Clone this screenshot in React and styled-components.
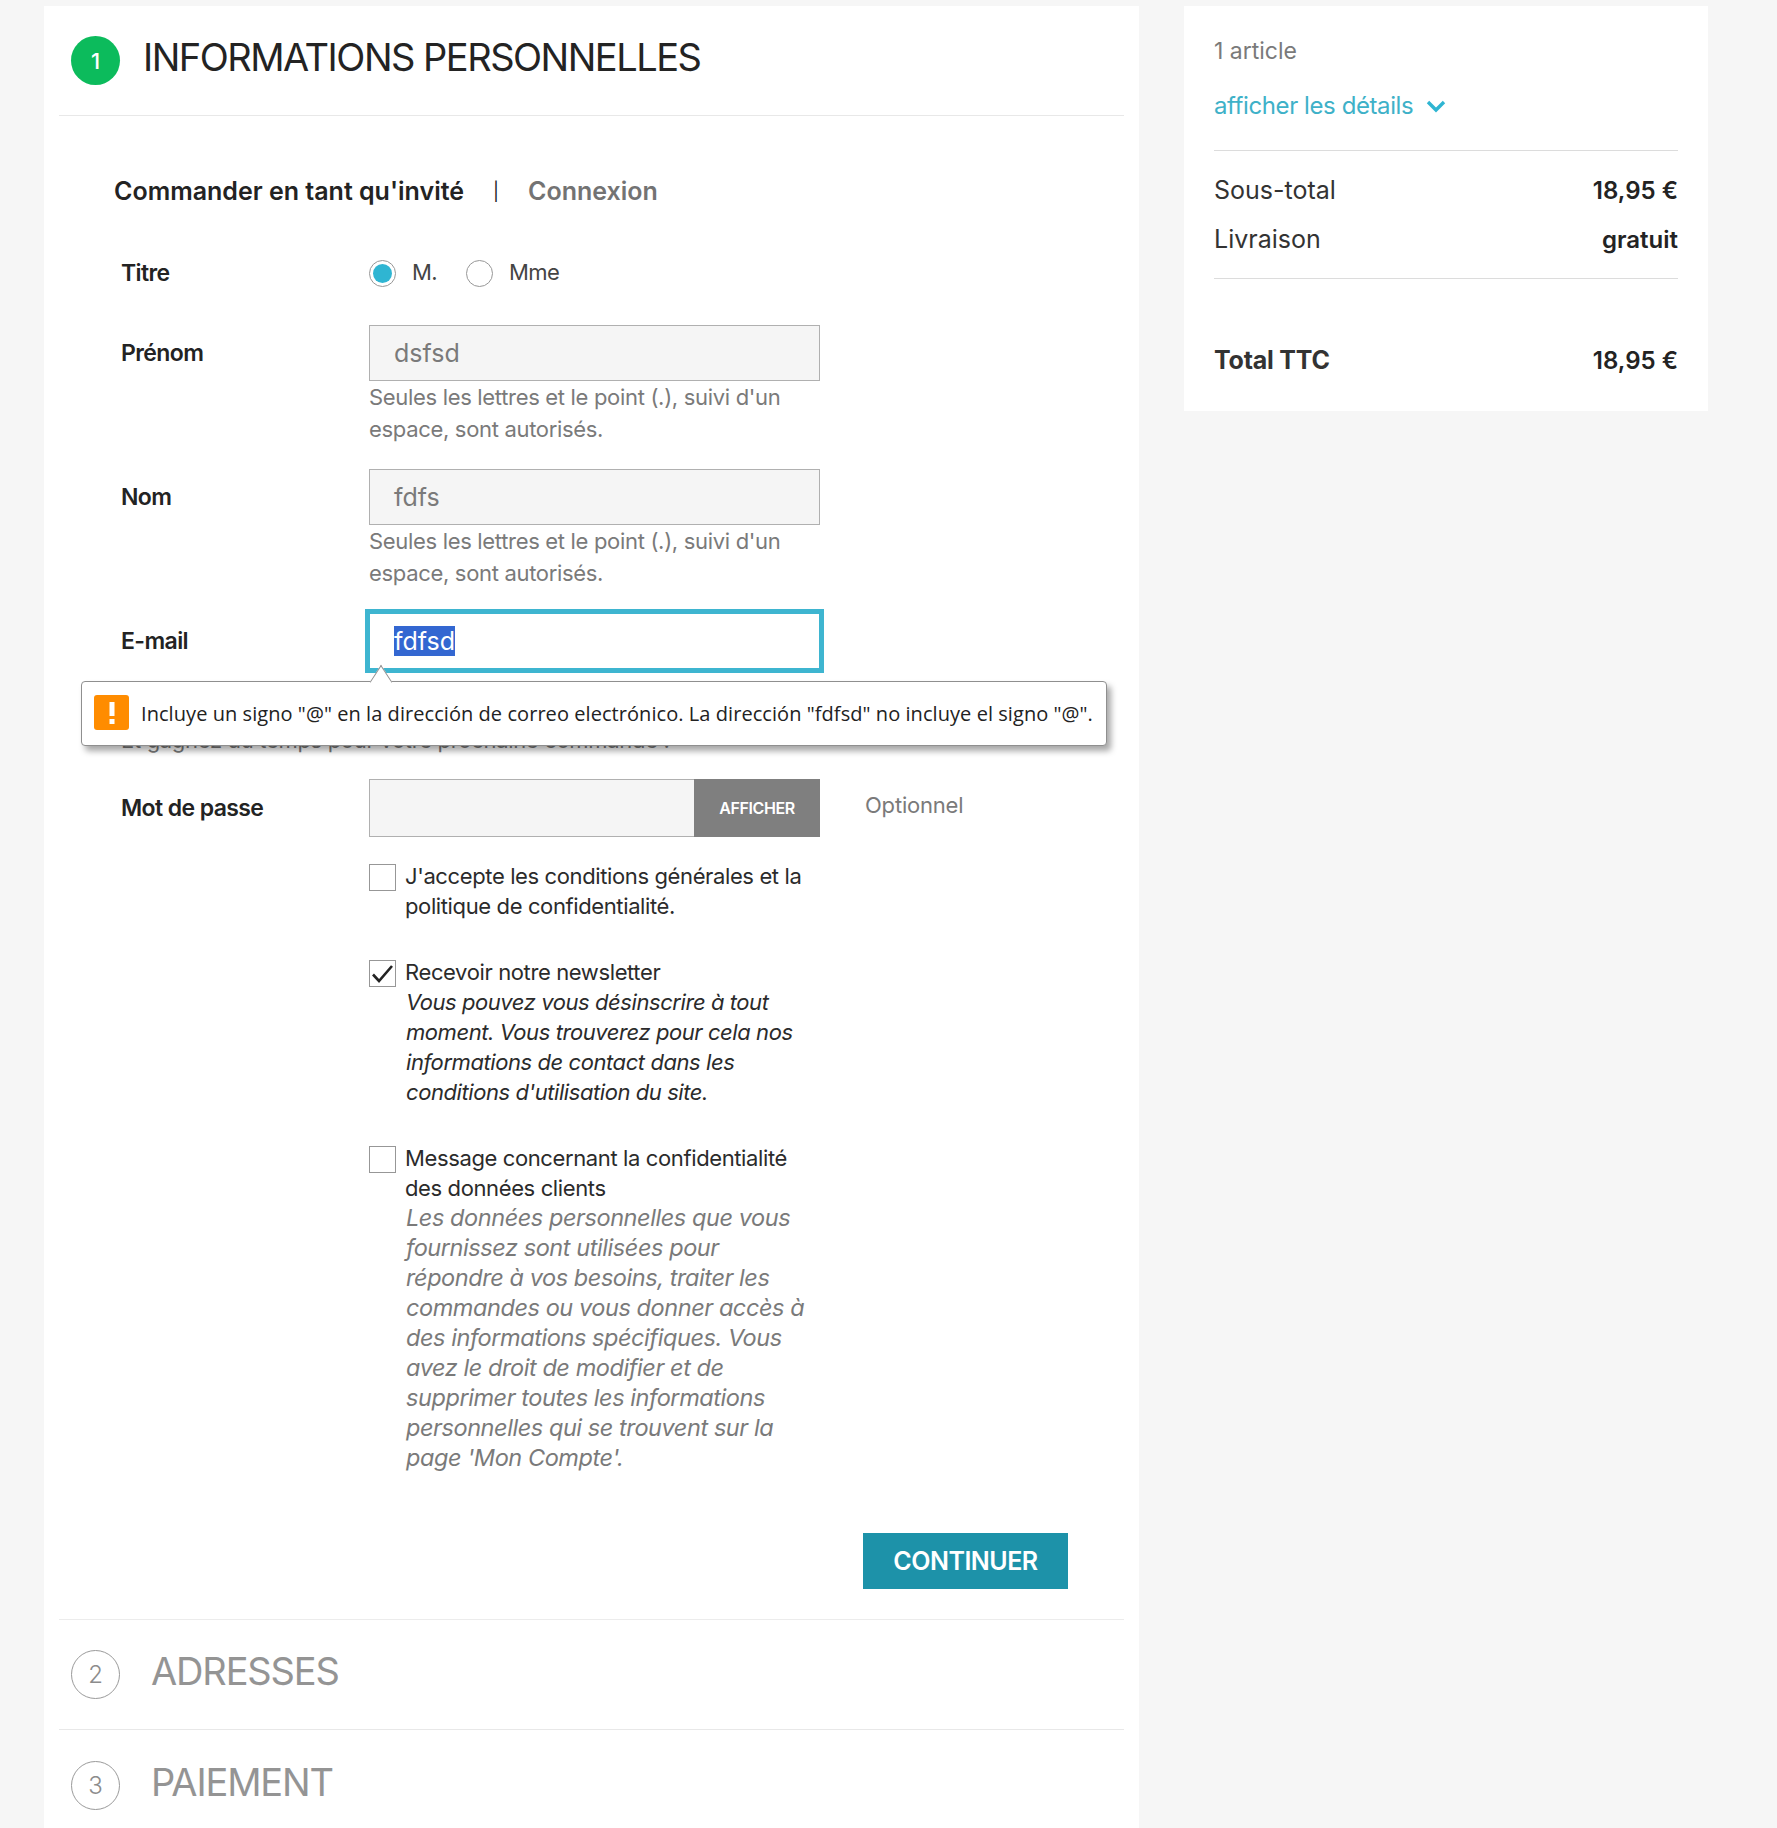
import React from 'react';
import styled, { createGlobalStyle } from 'styled-components';

const GlobalStyle = createGlobalStyle`
  html, body { margin: 0; padding: 0; background: #f6f6f6; }
  body { font-family: Inter, "Noto Sans", sans-serif; color: #232323; }
  * { box-sizing: border-box; }
`;

const Page = styled.div`
  display: flex;
  align-items: flex-start;
  gap: 45px;
  width: 1777px;
  height: 1828px;
  padding: 6px 0 0 44px;
  overflow: hidden;
`;

const Main = styled.main`
  width: 1095px;
  height: 1822px;
  padding: 0 15px;
  background: #fff;
`;

const StepHeader = styled.div`
  display: flex;
  align-items: center;
  height: ${p => p.$height}px;
  padding-left: 12px;
  border-bottom: ${p => (p.$line ? '1px solid #e8e8e8' : 'none')};
`;

const StepNumber = styled.span`
  flex: none;
  display: flex;
  align-items: center;
  justify-content: center;
  width: 49px;
  height: 49px;
  border-radius: 50%;
  font-size: ${p => (p.$active ? 22 : 24)}px;
  font-weight: ${p => (p.$active ? 500 : 300)};
  color: ${p => (p.$active ? '#fff' : '#8c8c8c')};
  background: ${p => (p.$active ? '#0cbb5c' : '#fff')};
  border: ${p => (p.$active ? 'none' : '1px solid #9a9a9a')};
`;

const StepTitle = styled.h1`
  margin: 0 0 7px ${p => (p.$active ? 23 : 31)}px;
  font-size: 38px;
  font-weight: 400;
  letter-spacing: ${p => (p.$active ? -1.5 : -1.15)}px;
  color: ${p => (p.$active ? '#232323' : '#949494')};
`;

const Content = styled.div`
  position: relative;
  height: 1504px;
  padding: 58px 55px 0 55px;
  border-bottom: 1px solid #ececec;
`;

const Tabs = styled.div`
  display: flex;
  align-items: center;
  height: 34px;
  font-size: 25px;
  font-weight: 600;
`;

const TabLink = styled.span`
  color: ${p => (p.$muted ? '#737373' : '#232323')};
`;

const TabSeparator = styled.span`
  margin: 0 29px;
  font-weight: 400;
  font-size: 18px;
`;

const Row = styled.div`
  display: grid;
  grid-template-columns: 248px 451px 1fr;
  margin-top: ${p => p.$top || 0}px;
  padding-left: 7px;
`;

const Label = styled.label`
  display: flex;
  align-items: center;
  height: ${p => p.$height || 56}px;
  font-size: 23px;
  font-weight: 600;
  letter-spacing: -0.6px;
`;

const RadioGroup = styled.div`
  display: flex;
  align-items: center;
  height: 28px;
`;

const Radio = styled.span`
  position: relative;
  width: 27px;
  height: 27px;
  border: 1px solid #979797;
  border-radius: 50%;
  background: #fff;
  &::after {
    content: '';
    display: ${p => (p.$checked ? 'block' : 'none')};
    position: absolute;
    inset: 3px;
    border-radius: 50%;
    background: #2fb5d2;
  }
`;

const RadioText = styled.span`
  margin: 0 ${p => p.$after || 0}px 2px 16px;
  font-size: 22px;
  letter-spacing: -0.6px;
  color: #444;
`;

const TextInput = styled.div`
  display: flex;
  align-items: center;
  height: 56px;
  padding-left: 24px;
  background: #f5f5f5;
  border: 1px solid #b0b0b0;
  font-size: 25px;
  color: #7a7a7a;
`;

const FocusedInput = styled.div`
  display: flex;
  align-items: center;
  width: 459px;
  height: 64px;
  margin: -4px 0 0 -4px;
  padding-left: 24px;
  background: #fff;
  border: 5px solid #3eb5d0;
  font-size: 25px;
`;

const Selected = styled.span`
  display: block;
  line-height: 30px;
  color: #fff;
  background: #3367d1;
`;

const HelpText = styled.div`
  font-size: 22px;
  line-height: 32px;
  letter-spacing: -0.32px;
  color: #7a7a7a;
`;

const Hint = styled.div`
  margin: 51px 0 0 7px;
  font-size: 22px;
  line-height: 32px;
  letter-spacing: -0.32px;
  color: #7a7a7a;
`;

const PasswordBox = styled.div`
  display: flex;
  height: 58px;
`;

const PasswordField = styled.div`
  flex: 1;
  background: #f5f5f5;
  border: 1px solid #b0b0b0;
  border-right: none;
`;

const ShowButton = styled.div`
  display: flex;
  align-items: center;
  justify-content: center;
  width: 126px;
  background: #7f7f7f;
  color: #fff;
  font-size: 16px;
  font-weight: 600;
  letter-spacing: -0.4px;
`;

const Optional = styled.span`
  margin: 13px 0 0 45px;
  font-size: 22px;
  letter-spacing: -0.2px;
  color: #7a7a7a;
`;

const CheckRow = styled.div`
  display: grid;
  grid-template-columns: 27px 1fr;
  column-gap: 9px;
  width: 451px;
  margin: ${p => p.$top}px 0 0 255px;
  font-size: 22px;
  line-height: 30px;
  letter-spacing: -0.38px;
  color: #2b2b2b;
`;

const CheckBox = styled.span`
  display: flex;
  align-items: center;
  justify-content: center;
  width: 27px;
  height: 27px;
  margin-top: 3px;
  border: 1px solid #979797;
  background: #fff;
`;

const Note = styled.em`
  display: block;
  padding-left: 1px;
  white-space: nowrap;
  font-size: ${p => (p.$muted ? 23.5 : 22)}px;
  letter-spacing: -0.43px;
  color: ${p => (p.$muted ? '#7a7a7a' : '#2b2b2b')};
`;

const Actions = styled.div`
  display: flex;
  justify-content: flex-end;
  margin-top: 60px;
  padding-right: 1px;
`;

const ContinueButton = styled.button`
  width: 205px;
  height: 56px;
  border: none;
  background: #1d92a9;
  color: #fff;
  font-family: inherit;
  font-size: 25px;
  font-weight: 600;
  letter-spacing: -0.5px;
`;

const Tooltip = styled.div`
  position: absolute;
  left: 22px;
  top: 565px;
  display: flex;
  align-items: center;
  width: 1026px;
  height: 65px;
  padding-left: 12px;
  background: #fff;
  border: 1px solid #8f8f8f;
  border-radius: 4px;
  box-shadow: 4px 5px 6px rgba(0, 0, 0, 0.35);
  font-family: "Open Sans", sans-serif;
  font-size: 20px;
  letter-spacing: 0.06px;
  color: #222;
  &::before {
    content: '';
    position: absolute;
    left: 289px;
    top: -10px;
    width: 19px;
    height: 19px;
    background: #fff;
    border-left: 1px solid #8f8f8f;
    border-top: 1px solid #8f8f8f;
    transform: rotate(45deg) skew(12deg, 12deg);
  }
`;

const WarningIcon = styled.span`
  flex: none;
  display: flex;
  align-items: center;
  justify-content: center;
  width: 35px;
  height: 35px;
  margin: -2px 12px 0 0;
  border-radius: 3px;
  background: #ff8c00;
`;

const Summary = styled.aside`
  width: 524px;
  height: 405px;
  padding: 27px 30px 0;
  background: #fff;
`;

const ItemCount = styled.div`
  font-size: 23px;
  line-height: 36px;
  color: #7a7a7a;
`;

const DetailsLink = styled.div`
  display: flex;
  align-items: center;
  gap: 13px;
  margin-top: 19px;
  font-size: 24px;
  line-height: 36px;
  letter-spacing: -0.41px;
  color: #3eb1c8;
`;

const SummaryRule = styled.div`
  height: 1px;
  margin-top: ${p => p.$top}px;
  background: #dcdcdc;
`;

const SummaryRow = styled.div`
  display: flex;
  justify-content: space-between;
  align-items: center;
  height: 36px;
  margin-top: ${p => p.$top}px;
  font-size: 25px;
  color: #333;
`;

const Amount = styled.span`
  font-size: 24px;
  font-weight: 600;
  color: #232323;
`;

const TotalLabel = styled.span`
  font-weight: 700;
  letter-spacing: -0.2px;
`;

const Check = () => (
  <svg width="25" height="25" viewBox="0 0 25 25" fill="none">
    <path d="M3 13.5 L9 20 L22 5" stroke="#232323" strokeWidth="2.6" />
  </svg>
);

const Chevron = () => (
  <svg width="20" height="14" viewBox="0 0 20 14" fill="none">
    <path d="M2 3 L10 11 L18 3" stroke="#2fb5d2" strokeWidth="3.4" />
  </svg>
);

const Bang = () => (
  <svg width="8" height="24" viewBox="0 0 8 24">
    <rect x="1.5" y="1" width="5" height="14" fill="#fff" />
    <rect x="1.5" y="18" width="5" height="5" fill="#fff" />
  </svg>
);

const helpNames = <>Seules les lettres et le point (.), suivi d'un<br />espace, sont autorisés.</>;

export default function App() {
  return (
    <>
      <GlobalStyle />
      <Page>
        <Main>
          <StepHeader $height={110} $line>
            <StepNumber $active>1</StepNumber>
            <StepTitle $active>INFORMATIONS PERSONNELLES</StepTitle>
          </StepHeader>
          <Content>
            <Tabs>
              <TabLink>Commander en tant qu'invité</TabLink>
              <TabSeparator>|</TabSeparator>
              <TabLink $muted>Connexion</TabLink>
            </Tabs>
            <Row $top={51}>
              <Label $height={28}>Titre</Label>
              <RadioGroup>
                <Radio $checked />
                <RadioText $after={29}>M.</RadioText>
                <Radio />
                <RadioText>Mme</RadioText>
              </RadioGroup>
            </Row>
            <Row $top={38}>
              <Label>Prénom</Label>
              <div>
                <TextInput>dsfsd</TextInput>
                <HelpText>{helpNames}</HelpText>
              </div>
            </Row>
            <Row $top={24}>
              <Label>Nom</Label>
              <div>
                <TextInput>fdfs</TextInput>
                <HelpText>{helpNames}</HelpText>
              </div>
            </Row>
            <Row $top={24}>
              <Label>E-mail</Label>
              <FocusedInput>
                <Selected>fdfsd</Selected>
              </FocusedInput>
            </Row>
            <Hint>Et gagnez du temps pour votre prochaine commande !</Hint>
            <Row $top={23}>
              <Label $height={58}>Mot de passe</Label>
              <PasswordBox>
                <PasswordField />
                <ShowButton>AFFICHER</ShowButton>
              </PasswordBox>
              <Optional>Optionnel</Optional>
            </Row>
            <CheckRow $top={24}>
              <CheckBox />
              <div>J'accepte les conditions générales et la politique de confidentialité.</div>
            </CheckRow>
            <CheckRow $top={36}>
              <CheckBox><Check /></CheckBox>
              <div>
                Recevoir notre newsletter
                <Note>Vous pouvez vous désinscrire à tout<br />moment. Vous trouverez pour cela nos<br />informations de contact dans les<br />conditions d'utilisation du site.</Note>
              </div>
            </CheckRow>
            <CheckRow $top={36}>
              <CheckBox />
              <div>
                Message concernant la confidentialité des données clients
                <Note $muted>Les données personnelles que vous<br />fournissez sont utilisées pour<br />répondre à vos besoins, traiter les<br />commandes ou vous donner accès à<br />des informations spécifiques. Vous<br />avez le droit de modifier et de<br />supprimer toutes les informations<br />personnelles qui se trouvent sur la<br />page 'Mon Compte'.</Note>
              </div>
            </CheckRow>
            <Actions>
              <ContinueButton>CONTINUER</ContinueButton>
            </Actions>
            <Tooltip>
              <WarningIcon><Bang /></WarningIcon>
              Incluye un signo "@" en la dirección de correo electrónico. La dirección "fdfsd" no incluye el signo "@".
            </Tooltip>
          </Content>
          <StepHeader $height={110} $line>
            <StepNumber>2</StepNumber>
            <StepTitle>ADRESSES</StepTitle>
          </StepHeader>
          <StepHeader $height={110}>
            <StepNumber>3</StepNumber>
            <StepTitle>PAIEMENT</StepTitle>
          </StepHeader>
        </Main>
        <Summary>
          <ItemCount>1 article</ItemCount>
          <DetailsLink>afficher les détails <Chevron /></DetailsLink>
          <SummaryRule $top={26} />
          <SummaryRow $top={21}>Sous-total<Amount>18,95 €</Amount></SummaryRow>
          <SummaryRow $top={13}>Livraison<Amount>gratuit</Amount></SummaryRow>
          <SummaryRule $top={21} />
          <SummaryRow $top={63}><TotalLabel>Total TTC</TotalLabel><Amount>18,95 €</Amount></SummaryRow>
        </Summary>
      </Page>
    </>
  );
}
